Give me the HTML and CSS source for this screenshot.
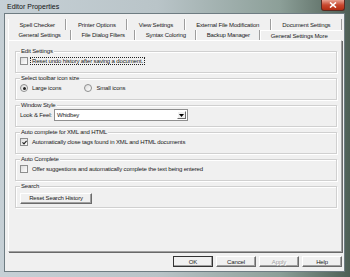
FILE: index.html
```html
<!DOCTYPE html>
<html>

<head>
    <meta charset="UTF-8">
    <title>Editor Properties</title>
    <link rel="stylesheet" href="styles.css">
</head>

<body>
    <div class="window">
        <div class="titlebar">
            <span class="title">Editor Properties</span>
            <div class="close">
                <svg width="8" height="6" viewBox="0 0 8 6">
                    <path d="M1 0.5 L7 5.5 M7 0.5 L1 5.5" stroke="#fff" stroke-width="1.6" />
                </svg>
            </div>
        </div>

        <div class="client">
            <div class="tabs">
                <div class="tabrow">
                    <div class="tab">Spell Checker</div>
                    <div class="tab">Printer Options</div>
                    <div class="tab">View Settings</div>
                    <div class="tab">External File Modification</div>
                    <div class="tab">Document Settings</div>
                </div>
                <div class="tabrow front">
                    <div class="tab">General Settings</div>
                    <div class="tab">File Dialog Filters</div>
                    <div class="tab">Syntax Coloring</div>
                    <div class="tab">Backup Manager</div>
                    <div class="tab selected">General Settings More</div>
                </div>

                <div class="page">
                    <div class="group">
                        <div class="group-title">Edit Settings</div>
                        <div class="row">
                            <span class="check"></span>
                            <span class="label focus">Reset undo history after saving a document.</span>
                        </div>
                    </div>

                    <div class="group">
                        <div class="group-title">Select toolbar icon size</div>
                        <div class="row">
                            <span class="radio on"></span>
                            <span class="label">Large icons</span>
                            <span class="radio second"></span>
                            <span class="label">Small icons</span>
                        </div>
                    </div>

                    <div class="group">
                        <div class="group-title">Window Style</div>
                        <div class="row">
                            <span class="field-label">Look &amp; Feel:</span>
                            <div class="select">
                                <span class="select-value">Whidbey</span>
                                <span class="select-btn">
                                    <svg width="5" height="3" viewBox="0 0 5 3">
                                        <path d="M0 0 H5 L2.5 3 Z" fill="#000" />
                                    </svg>
                                </span>
                            </div>
                        </div>
                    </div>

                    <div class="group">
                        <div class="group-title">Auto complete for XML and HTML</div>
                        <div class="row">
                            <span class="check on">
                                <svg width="5" height="5" viewBox="0 0 5 5">
                                    <path d="M0.5 2.3 L2 3.8 L4.6 0.8" stroke="#222" stroke-width="1.2" fill="none" />
                                </svg>
                            </span>
                            <span class="label">Automatically close tags found in XML and HTML documents</span>
                        </div>
                    </div>

                    <div class="group">
                        <div class="group-title">Auto Complete</div>
                        <div class="row">
                            <span class="check"></span>
                            <span class="label">Offer suggestions and automatically complete the text being entered</span>
                        </div>
                    </div>

                    <div class="group">
                        <div class="group-title">Search</div>
                        <div class="row">
                            <button class="btn wide">Reset Search History</button>
                        </div>
                    </div>
                </div>
            </div>

            <div class="buttons">
                <button class="btn default">OK</button>
                <button class="btn">Cancel</button>
                <button class="btn" disabled>Apply</button>
                <button class="btn">Help</button>
            </div>
        </div>
    </div>
</body>

</html>
```

FILE: styles.css
```css
body {
    margin: 0;
    padding: 0;
    background-color: #dfe6ea;
    font-family: "Liberation Sans", Arial, sans-serif;
    font-size: 6px;
    letter-spacing: -0.15px;
    color: #1a1a1a;
}

.window {
    width: 350px;
    height: 277px;
    box-sizing: border-box;
    display: flex;
    flex-direction: column;
    padding: 0 5px 5px 4px;
    background: linear-gradient(90deg, #c6d0d6 0%, #b9c4c8 45%, #8c9f98 80%, #4e5f55 100%);
}

/* タイトルバー */
.titlebar {
    height: 13px;
    display: flex;
    align-items: center;
    justify-content: space-between;
    flex-shrink: 0;
}

.title {
    font-size: 7px;
    letter-spacing: 0;
    color: #111;
    margin-left: 3px;
    margin-top: -1px;
}

.close {
    width: 22px;
    height: 10px;
    margin-top: -3px;
    border: 1px solid #5a2a22;
    border-top: none;
    border-radius: 0 0 3px 3px;
    background: linear-gradient(#e9a393, #c8482f 50%, #b22c12);
    display: flex;
    align-items: center;
    justify-content: center;
}

.client {
    flex: 1;
    background-color: #f0f0f0;
    border: 1px solid #6e7c82;
    display: flex;
    flex-direction: column;
}

.tabs {
    padding: 5px 2px 0 3px;
}

/* タブ */
.tabrow {
    display: flex;
    height: 11px;
}

.tabrow.front {
    height: 10px;
}

.tab {
    flex: 1 1 auto;
    text-align: center;
    line-height: 12px;
    padding: 0 3px;
    white-space: nowrap;
    box-sizing: border-box;
    border-left: 1px solid #fff;
    border-right: 1px solid #9d9d9d;
}

.tabrow.front .tab {
    line-height: 10px;
}

.tab.selected {
    border-right: none;
    border-top: 1px solid #fff;
    line-height: 9px;
    padding-right: 8px;
}

.page {
    height: 212px;
    box-sizing: border-box;
    border-top: 1px solid #fff;
    border-left: 1px solid #fff;
    border-right: 1px solid #a0a0a0;
    border-bottom: 1px solid #a0a0a0;
    box-shadow: 1px 1px 0 #696969;
    padding: 5px 4px 0 6px;
}

/* グループボックス */
.group {
    height: 22px;
    box-sizing: border-box;
    margin-top: 5px;
    border: 1px solid #d0d0d0;
    box-shadow: inset 1px 1px 0 #fff, 1px 1px 0 #fff;
    padding: 0 4px;
}

.group-title {
    width: fit-content;
    margin: -5px 0 0 0;
    padding: 0 1px;
    line-height: 8px;
    background-color: #f0f0f0;
}

.row {
    display: flex;
    align-items: center;
    height: 12px;
}

.check {
    width: 6px;
    height: 6px;
    border: 1px solid #8e8f8f;
    background: linear-gradient(135deg, #dcdcdc, #fff);
    display: flex;
    align-items: center;
    justify-content: center;
    flex-shrink: 0;
}

.radio {
    width: 6px;
    height: 6px;
    border: 1px solid #8e8f8f;
    border-radius: 50%;
    background: linear-gradient(135deg, #dcdcdc, #fff);
    display: flex;
    align-items: center;
    justify-content: center;
    flex-shrink: 0;
}

.radio.on::after {
    content: "";
    width: 3px;
    height: 3px;
    border-radius: 50%;
    background-color: #222;
}

.radio.second {
    margin-left: 21px;
}

.label {
    margin-left: 2px;
    white-space: nowrap;
    padding: 0 1px;
    border: 1px solid transparent;
}

.label.focus {
    border: 1px dotted #222;
}

.field-label {
    white-space: nowrap;
}

.select {
    width: 134px;
    height: 12px;
    box-sizing: border-box;
    margin-left: 2px;
    border: 1px solid #8f8f8f;
    background-color: #fff;
    display: flex;
    align-items: center;
    justify-content: space-between;
}

.select-value {
    padding-left: 2px;
}

.select-btn {
    width: 9px;
    height: 8px;
    box-sizing: border-box;
    margin-right: 1px;
    border: 1px solid;
    border-color: #fff #6b6b6b #6b6b6b #fff;
    background-color: #f0f0f0;
    display: flex;
    align-items: center;
    justify-content: center;
}

/* ボタン */
.btn {
    font-family: "Liberation Sans", Arial, sans-serif;
    font-size: 6px;
    letter-spacing: -0.15px;
    color: #1a1a1a;
    width: 40px;
    height: 11px;
    padding: 0;
    margin: 0;
    box-sizing: border-box;
    background-color: #f0f0f0;
    border: 1px solid;
    border-color: #fff #6b6b6b #6b6b6b #fff;
    box-shadow: inset -1px -1px 0 #a0a0a0;
}

.btn.wide {
    width: 72px;
    margin-top: 4px;
}

.btn.default {
    outline: 1px solid #333;
    outline-offset: -1px;
}

.btn:disabled {
    color: #a0a0a0;
    text-shadow: 1px 1px 0 #fff;
}

.buttons {
    display: flex;
    justify-content: flex-end;
    gap: 3px;
    margin-top: 4px;
    padding-right: 2px;
}
```
